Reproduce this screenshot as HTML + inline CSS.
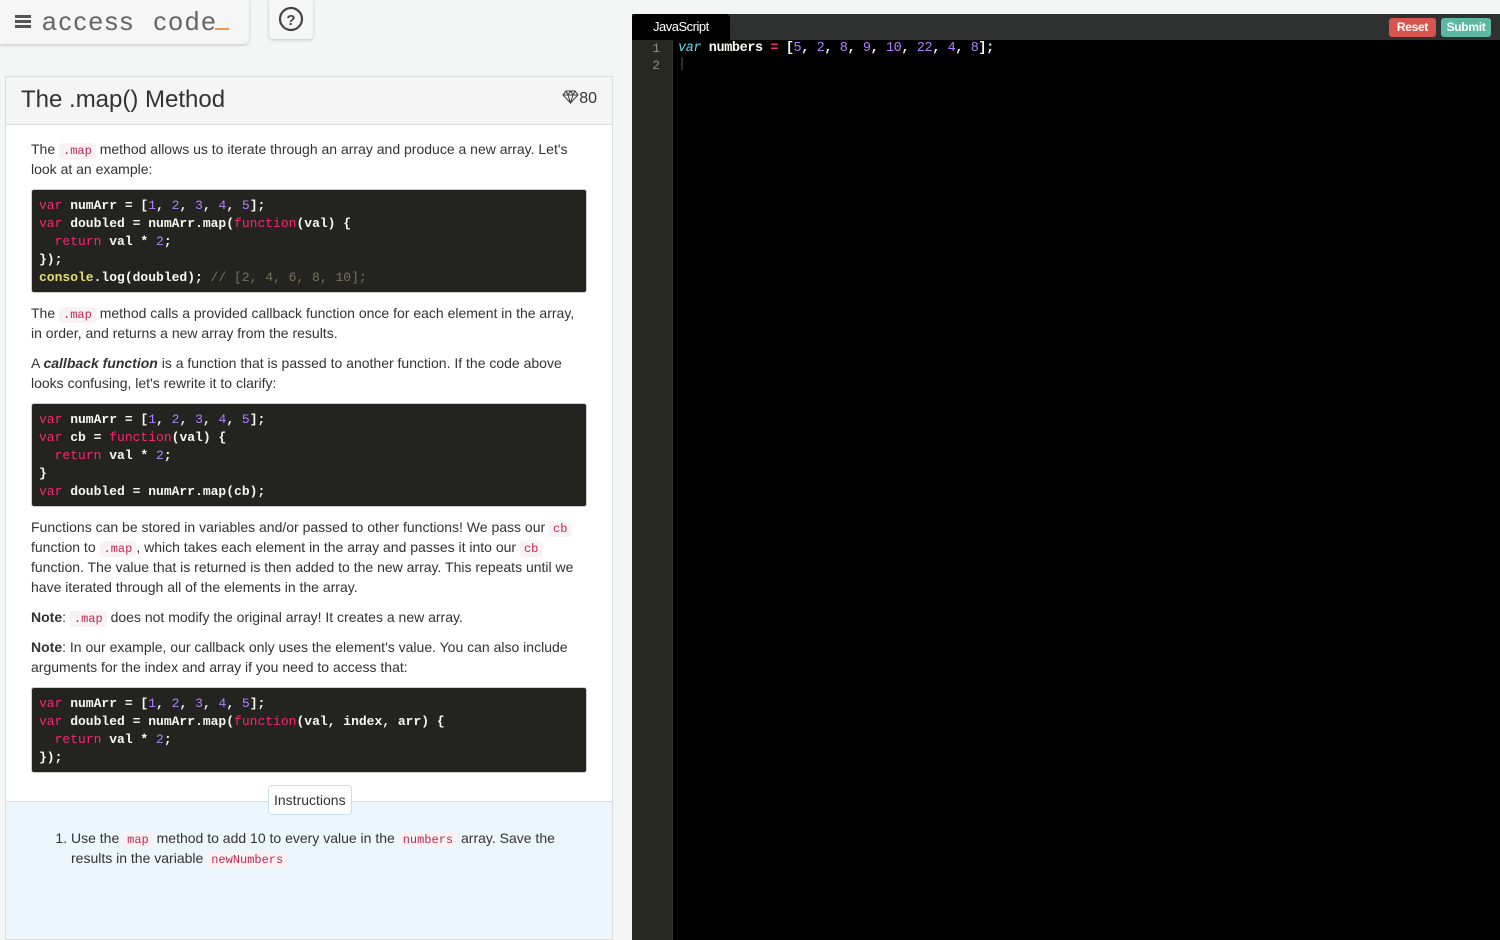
<!DOCTYPE html>
<html><head><meta charset="utf-8"><style>
*{box-sizing:border-box;margin:0;padding:0}
body{width:1500px;height:940px;overflow:hidden;background:#f4f5f5;font-family:"Liberation Sans",sans-serif;color:#333;position:relative}
.logo{position:absolute;left:0;top:0;width:249px;height:44px;background:#f6f6f6;border-radius:0 0 6px 0;box-shadow:0 1px 3px rgba(0,0,0,.2)}
.logo .bars{position:absolute;left:15px;top:15px;width:16px}
.logo .bars i{display:block;height:2.5px;background:#555;margin-bottom:2.5px}
.logo .t{position:absolute;left:42px;top:6px;font-size:26px;color:#666;letter-spacing:2px}
.logo .u{position:absolute;left:215px;top:28px;width:14px;height:2px;background:#f4955e}
.help{position:absolute;left:269px;top:0;width:44px;height:39px;background:#f6f6f6;border-radius:0 0 4px 4px;box-shadow:0 1px 3px rgba(0,0,0,.2)}
.panel{position:absolute;left:5px;top:76px;width:608px;height:864px;background:#fff;border:1px solid #ddd;overflow:hidden}
.ph{height:48px;background:#f5f5f5;border-bottom:1px solid #ddd;position:relative}
.ph h1{font-weight:normal;font-size:24px;position:absolute;left:15px;top:9px;color:#333}
.ph .pts{position:absolute;right:15px;top:13px;font-size:16px}
.body{padding:14px 25px 0 25px;font-size:14px;line-height:20px}
p{margin-bottom:10px}
code{font-family:"Liberation Mono",monospace;font-size:12px;line-height:1;color:#c7254e;background:#f9f2f4;padding:1px 4px;border-radius:3px}
pre{background:#23241f;color:#f8f8f2;font-family:"Liberation Mono",monospace;font-size:13px;line-height:18px;padding:7px 7px 5px;border-radius:3px;margin:0 0 10px;font-weight:bold;border:1px solid #ccc}
.k{color:#f92672;font-weight:normal}.n{color:#ae81ff;font-weight:normal}.c{color:#75715e;font-weight:normal}.y{color:#e6db74}
.ins{position:absolute;left:0;top:724px;width:606px;height:150px;background:#ebf6fd;border-top:1px solid #c5e0ee}
.tab{position:absolute;left:262px;top:-17px;background:#fff;border:1px solid #c5e0ee;border-radius:4px;padding:6px 5px;font-size:14px}
.ins ol{position:absolute;left:65px;top:26px;width:500px;font-size:14px;line-height:20px}
.ed{position:absolute;left:632px;top:14px;width:868px;height:926px;background:#000}
.tb{height:26px;background:#2f3130}
.jt{position:absolute;left:0;top:0;width:98px;height:26px;background:#000;color:#fff;font-size:13px;padding:5px 0 0 21px;border-radius:4px 4px 0 0;letter-spacing:-.5px}
.btn{position:absolute;top:4px;height:19px;color:#fff;font-size:12px;font-weight:bold;border-radius:3px;padding:2px 0;text-align:center;letter-spacing:-.3px}
.gut{position:absolute;left:0;top:26px;width:41px;height:900px;background:#272822;border-right:1px solid #333}
.gut div{color:#8f908a;font-family:"Liberation Mono",monospace;font-size:13px;line-height:16px;text-align:right;padding-right:12px;padding-top:1px}
.cl{position:absolute;left:46px;top:27px;font-family:"Liberation Mono",monospace;font-size:13.5px;letter-spacing:-.4px;font-weight:bold;line-height:16px;color:#f8f8f2}
</style></head><body>
<div class="logo"><div class="bars"><i></i><i></i><i></i></div><div class="t">access&nbsp; code</div><div class="u"></div></div>
<div class="help"><svg width="44" height="39"><circle cx="22" cy="19" r="11" fill="none" stroke="#444" stroke-width="2.2"/><text x="22" y="25" text-anchor="middle" font-family="Liberation Sans" font-weight="bold" font-size="15" fill="#444">?</text></svg></div>
<div class="panel">
<div class="ph"><h1>The .map() Method</h1><div class="pts"><svg width="17" height="14" viewBox="0 0 17 14" style="vertical-align:-1px"><path d="M1 5L4 1H13L16 5L8.5 13Z M1 5H16 M6 5L8.5 13L11 5 M4 1L6 5L8.5 1L11 5L13 1" fill="none" stroke="#444" stroke-width="1.1"/></svg>80</div></div>
<div class="body">
<p>The <code>.map</code> method allows us to iterate through an array and produce a new array. Let's look at an example:</p>
<pre><span class="k">var</span> numArr = [<span class="n">1</span>, <span class="n">2</span>, <span class="n">3</span>, <span class="n">4</span>, <span class="n">5</span>];
<span class="k">var</span> doubled = numArr.map(<span class="k">function</span>(val) {
  <span class="k">return</span> val * <span class="n">2</span>;
});
<span class="y">console</span>.log(doubled); <span class="c">// [2, 4, 6, 8, 10];</span></pre>
<p>The <code>.map</code> method calls a provided callback function once for each element in the array, in order, and returns a new array from the results.</p>
<p>A <b><i>callback function</i></b> is a function that is passed to another function. If the code above looks confusing, let's rewrite it to clarify:</p>
<pre><span class="k">var</span> numArr = [<span class="n">1</span>, <span class="n">2</span>, <span class="n">3</span>, <span class="n">4</span>, <span class="n">5</span>];
<span class="k">var</span> cb = <span class="k">function</span>(val) {
  <span class="k">return</span> val * <span class="n">2</span>;
}
<span class="k">var</span> doubled = numArr.map(cb);</pre>
<p>Functions can be stored in variables and/or passed to other functions! We pass our <code>cb</code> function to <code>.map</code>, which takes each element in the array and passes it into our <code>cb</code> function. The value that is returned is then added to the new array. This repeats until we have iterated through all of the elements in the array.</p>
<p><b>Note</b>: <code>.map</code> does not modify the original array! It creates a new array.</p>
<p><b>Note</b>: In our example, our callback only uses the element's value. You can also include arguments for the index and array if you need to access that:</p>
<pre><span class="k">var</span> numArr = [<span class="n">1</span>, <span class="n">2</span>, <span class="n">3</span>, <span class="n">4</span>, <span class="n">5</span>];
<span class="k">var</span> doubled = numArr.map(<span class="k">function</span>(val, index, arr) {
  <span class="k">return</span> val * <span class="n">2</span>;
});</pre>
</div>
<div class="ins"><div class="tab">Instructions</div>
<ol><li>Use the <code>map</code> method to add 10 to every value in the <code>numbers</code> array. Save the results in the variable <code>newNumbers</code></li></ol></div>
</div>
<div class="ed"><div class="tb"></div><div class="jt">JavaScript</div>
<div class="btn" style="left:757px;width:47px;background:#d9534f">Reset</div>
<div class="btn" style="left:809px;width:50px;background:#5cb8a2">Submit</div>
<div class="gut"><div>1</div><div>2</div></div>
<div class="cl"><i style="color:#66d9ef;font-weight:normal">var</i> numbers <span style="color:#f92672">=</span> [<span class="n">5</span>, <span class="n">2</span>, <span class="n">8</span>, <span class="n">9</span>, <span class="n">10</span>, <span class="n">22</span>, <span class="n">4</span>, <span class="n">8</span>];<br><span style="color:#555;font-weight:normal">|</span></div>
</div>
</body></html>
